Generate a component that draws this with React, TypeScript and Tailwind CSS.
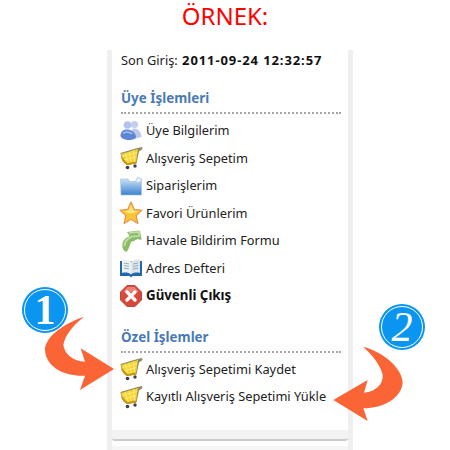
import type { ReactNode } from "react";

function Cart() {
  return (
    <svg width="24" height="24" viewBox="0 0 24 24" className="shrink-0">
      <path d="M23 1 L18.5 2 L1.5 7 C2 12 4 17 8 19 L17.5 17.5 L20 5.5 L23.5 3 Z" fill="#8f8a66" />
      <path d="M19 3 L2 8 C3 12 5 16 8.5 18 L17 16.5 Z" fill="#f7d22e" />
      <path d="M6 7 L9.5 17 M10 6 L12.5 16.5 M14.5 4.5 L15.5 15.5 M3.5 10.5 L18 6.5 M5 14 L17 10.5" stroke="#fdf08c" strokeWidth="0.9" />
      <path d="M3 12 C4.5 15 6 17 8.5 18 L17 16.5" fill="none" stroke="#c89610" strokeWidth="1.8" />
      <circle cx="8.5" cy="21.5" r="1.8" fill="#3e3e3e" />
      <circle cx="16" cy="20" r="1.7" fill="#3e3e3e" />
    </svg>
  );
}

function Users() {
  return (
    <svg width="24" height="24" viewBox="0 0 24 24" className="shrink-0">
      <circle cx="15.5" cy="5.5" r="3.6" fill="#c4cef0" />
      <circle cx="8.5" cy="6" r="3.8" fill="#b3c2ee" />
      <path d="M13 10 C18 8 22 12 22.5 18 L14 20 Z" fill="#bcc8ec" />
      <path d="M1.5 17 C1.5 12 5 10 8.5 10.5 C13 11 17 14 17 18 C17 22 3 22.5 1.5 17 Z" fill="#5d87d6" />
      <path d="M4 14.5 C6 12.5 10 12.5 13 15" stroke="#a9c2f0" strokeWidth="1.6" fill="none" />
    </svg>
  );
}

function Folder() {
  return (
    <svg width="24" height="24" viewBox="0 0 24 24" className="shrink-0">
      <defs>
        <linearGradient id="folderFill" x1="0" y1="0" x2="0" y2="1">
          <stop offset="0" stopColor="#dcecf9" />
          <stop offset="1" stopColor="#3a82d0" />
        </linearGradient>
      </defs>
      <path d="M1.5 5 L9 5 L11 7.5 L16 7.5 L19 3 L22.5 5 L22.5 21 L2 21 Z" fill="url(#folderFill)" stroke="#9fc0dd" strokeWidth="0.6" />
      <path d="M17 8 L19.5 4 L22 7 Z" fill="#f6f9fc" />
    </svg>
  );
}

function Star() {
  return (
    <svg width="24" height="24" viewBox="0 0 24 24" className="shrink-0">
      <path
        d="M12 1 L15.2 8.3 L23 9.2 L17.2 14.6 L18.9 22.5 L12 18.4 L5.1 22.5 L6.8 14.6 L1 9.2 L8.8 8.3 Z"
        fill="#fbc433"
        stroke="#e58f4a"
        strokeWidth="1.1"
        strokeLinejoin="round"
      />
      <path d="M12 3.5 L14.4 9.5 L20 10.5 L12 12.5 L4 10.5 L9.6 9.5 Z" fill="#fde483" />
    </svg>
  );
}

function GreenArrow() {
  return (
    <svg width="24" height="24" viewBox="0 0 24 24" className="shrink-0">
      <path d="M8 3 L21 1.5 L22.5 11 L18.5 10 L15 12 L12 13 C11 16 10 20 7.5 23 C4.5 22 3 19 3.5 15 C4 11 7 9 10.5 7 Z" fill="#8cbd66" />
      <path d="M10 4 L20 3 L20 7 L13 7.5 C9 9 6 12 5.5 17" stroke="#c4e0ac" strokeWidth="1.7" fill="none" />
    </svg>
  );
}

function Book() {
  return (
    <svg width="24" height="24" viewBox="0 0 24 24" className="shrink-0">
      <path d="M1 5 L12 5.5 L23 5 L23 20 L13.5 20 L12 21.5 L10.5 20 L1 20 Z" fill="#2268ad" />
      <path d="M3 4 C6 3 10 4 12 6 L12 18.5 C10 16.5 6 16 3 17 Z" fill="#eef2f4" />
      <path d="M21 4 C18 3 14 4 12 6 L12 18.5 C14 16.5 18 16 21 17 Z" fill="#dde5ea" />
      <path d="M5 7 L10 8 M5 9.5 L10 10.5 M5 12 L10 13 M14 8 L19 7 M14 10.5 L19 9.5 M14 13 L19 12" stroke="#8ea3b3" strokeWidth="0.9" />
    </svg>
  );
}

function Stop() {
  return (
    <svg width="24" height="24" viewBox="0 0 24 24" className="shrink-0">
      <path d="M8 1.5 L16 1.5 L22.5 8 L22.5 16 L16 22.5 L8 22.5 L1.5 16 L1.5 8 Z" fill="#d9483b" stroke="#a83228" strokeWidth="0.8" strokeLinejoin="round" />
      <path d="M8.5 3 L15.5 3 L20 8 L4 8 Z" fill="#ea8076" />
      <path d="M8 8 L16 16 M16 8 L8 16" stroke="#fff" strokeWidth="3.4" strokeLinecap="round" />
    </svg>
  );
}

function Row({ icon, children, bold }: { icon: ReactNode; children: ReactNode; bold?: boolean }) {
  return (
    <div className={`flex h-[27.5px] items-center gap-[3px] ${bold ? "text-[13.3px] font-bold text-[#111]" : "text-[12.8px] text-[#222]"}`}>
      {icon}
      <span>{children}</span>
    </div>
  );
}

function SectionTitle({ children }: { children: ReactNode }) {
  return (
    <div className="ml-[2px] border-b-2 border-dotted border-[#a5a5a5] pb-[4px] text-[13.4px] leading-[20px] font-bold text-[#4a7ab5]">
      {children}
    </div>
  );
}

function Badge({ n, className }: { n: ReactNode; className: string }) {
  return (
    <div
      className={`absolute flex h-[46px] w-[46px] items-center justify-center rounded-full bg-[#0a95f0] text-[42px] leading-none text-white outline-1 -outline-offset-3 outline-white ${className}`}
      style={{ fontFamily: '"Liberation Serif", serif' }}
    >
      {n}
    </div>
  );
}

export default function App() {
  return (
    <div className="relative h-[450px] w-[450px] overflow-hidden bg-white font-['Noto_Sans',sans-serif]">
      <div className="flex h-[50px] justify-center">
        <h1 className="text-[24px] leading-[32px] text-[#ff0000]">ÖRNEK:</h1>
      </div>

      <div className="ml-[107px] flex h-[400px] w-[246px] flex-col border-x-[5px] border-[#efefef]">
        <div className="h-[380px] px-[7px]">
          <div className="ml-[2px] text-[12.8px] leading-[20px] text-[#222]">
            Son Giriş: <b className="ml-[1px] text-[13px] tracking-[0.9px] text-[#111]">2011-09-24 12:32:57</b>
          </div>

          <div className="mt-[18px]">
            <SectionTitle>Üye İşlemleri</SectionTitle>
            <div className="mt-[3px]">
              <Row icon={<Users />}>Üye Bilgilerim</Row>
              <Row icon={<Cart />}>Alışveriş Sepetim</Row>
              <Row icon={<Folder />}>Siparişlerim</Row>
              <Row icon={<Star />}>Favori Ürünlerim</Row>
              <Row icon={<GreenArrow />}>Havale Bildirim Formu</Row>
              <Row icon={<Book />}>Adres Defteri</Row>
              <Row icon={<Stop />} bold>Güvenli Çıkış</Row>
            </div>
          </div>

          <div className="mt-[17px]">
            <SectionTitle>Özel İşlemler</SectionTitle>
            <div className="mt-[3px]">
              <Row icon={<Cart />}>Alışveriş Sepetimi Kaydet</Row>
              <Row icon={<Cart />}>Kayıtlı Alışveriş Sepetimi Yükle</Row>
            </div>
          </div>
        </div>
        <div className="h-[11px] rounded-b-[3px] border-b-2 border-[#cccccc] bg-[#f3f3f3]" />
        <div className="mt-[5px] flex-1 bg-[#f6f6f6]" />
      </div>

      <Badge n={<span className="font-bold">1</span>} className="left-[22px] top-[287px]" />
      <Badge n={<span className="italic">2</span>} className="left-[379px] top-[304px]" />

      <svg width="150" height="130" viewBox="0 0 450 390" className="absolute left-[10px] top-[285px]">
        <path
          d="M222 95 C150 120 105 160 105 195 C108 250 170 275 225 272 L210 315 L312 252 L212 190 L225 230 C190 228 165 210 160 180 C165 150 190 120 222 95 Z"
          fill="#fb6434"
        />
      </svg>
      <svg width="140" height="155" viewBox="0 0 420 465" className="absolute left-[300px] top-[295px]">
        <path
          d="M190 155 C245 170 305 215 308 262 C305 310 250 340 190 340 L203 378 L100 315 L203 255 L192 293 C230 290 250 265 248 240 C240 205 215 180 190 155 Z"
          fill="#fb6434"
        />
      </svg>
    </div>
  );
}
